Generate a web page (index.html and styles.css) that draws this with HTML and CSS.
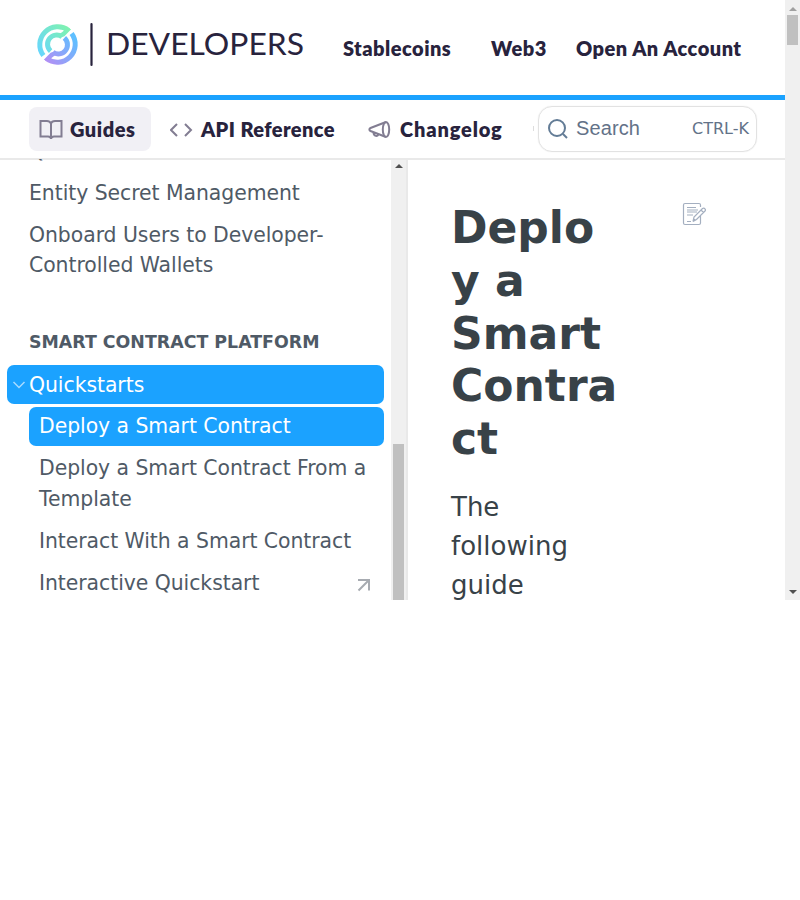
FILE: index.html
```html
<!DOCTYPE html>
<html lang="en">
<head>
<meta charset="utf-8">
<title>Deploy a Smart Contract</title>
<link rel="stylesheet" href="styles.css">
</head>
<body>
<div class="app">
  <div class="page">
    <header class="top">
      <svg class="logo" width="280" height="60" viewBox="30 15 280 60">
        <defs>
          <linearGradient id="g1" gradientUnits="userSpaceOnUse" x1="40" y1="52" x2="68" y2="30"><stop offset="0" stop-color="#68d7fa"/><stop offset="1" stop-color="#7ef1b3"/></linearGradient>
          <linearGradient id="g2" gradientUnits="userSpaceOnUse" x1="48" y1="62" x2="74" y2="38"><stop offset="0" stop-color="#b090f5"/><stop offset="1" stop-color="#5fbfff"/></linearGradient>
        </defs>
        <path stroke="url(#g1)" stroke-width="5" d="M43.400 55.600A18 18 0 0 1 68.600 30.400M50.600 51.100A9.200 9.200 0 0 1 62 36.700"/>
        <path fill="url(#g1)" d="M66 27.500L71.200 29.200L64.400 36.200L59.500 38L60 33.800L63.500 31Z"/>
        <path stroke="url(#g2)" stroke-width="5" d="M71.600 33.400A18 18 0 0 1 46.400 58.600M64.400 37.900A9.200 9.200 0 0 1 53 52.300"/>
        <path fill="url(#g2)" d="M49 61.500L43.800 59.800L50.600 52.800L55.500 51L55 55.200L51.500 58Z"/>
        <path d="M91.500 24V65" stroke="#28233d" stroke-width="2.200" stroke-linecap="round"/>
        <text class="brand" x="106" y="55.200" textLength="198" lengthAdjust="spacingAndGlyphs">DEVELOPERS</text>
      </svg>
      <nav class="links"><a class="l1">Stablecoins</a><a class="l2">Web3</a><a class="l3">Open An Account</a></nav>
    </header>
    <div class="subnav">
      <a class="tab active t1"><svg width="24" height="22" viewBox="0 0 24 22"><path d="M12 4.500C11 2.500 9.500 2 8 2H1.500V17.500H9C11 17.500 12 18.500 12 20C12 18.500 13 17.500 15 17.500H22.500V2H16C14 2 12.500 3 12 4.500V20"/></svg><span>Guides</span></a>
      <a class="tab t2"><svg width="24" height="22" viewBox="0 0 24 22"><path d="M7 5L1 11L7 17M15 5L21 11L15 17"/></svg><span>API Reference</span></a>
      <a class="tab t3"><svg width="24" height="22" viewBox="0 0 24 22"><ellipse cx="18" cy="10.500" rx="3.200" ry="7.500"/><path d="M18 3L2.500 9C1 9.700 1 11.300 2.500 12L18 18M5.500 13.300C5.500 17.500 10 18 10.500 15"/></svg><span>Changelog</span></a>
      <i class="tick"></i>
      <div class="search"><svg width="22" height="22" viewBox="0 0 22 22"><circle cx="10" cy="10" r="8"/><path d="M16 16L20 20"/></svg><span>Search</span><kbd>CTRL-K</kbd></div>
    </div>
    <div class="body">
      <aside class="side">
        <div class="item">Quickstarts</div>
        <div class="item">Entity Secret Management</div>
        <div class="item">Onboard Users to Developer-Controlled Wallets</div>
        <h2>SMART CONTRACT PLATFORM</h2>
        <div class="item parent"><svg width="14" height="10" viewBox="0 0 14 10"><path d="M1.500 2L7 7.500L12.500 2"/></svg>Quickstarts</div>
        <div class="item sub on">Deploy a Smart Contract</div>
        <div class="item sub">Deploy a Smart Contract From a Template</div>
        <div class="item sub">Interact With a Smart Contract</div>
        <div class="item sub out">Interactive Quickstart<svg width="14" height="14" viewBox="0 0 14 14"><path d="M1 2H12V12.500M12 2L1.500 12.500"/></svg></div>
      </aside>
      <div class="bar inner"><i class="up"></i><b></b></div>
      <main>
        <div class="copy">
          <h1>Deploy a Smart Contract</h1>
          <p>The following guide</p>
        </div>
        <svg class="edit" width="24" height="24" viewBox="0 0 24 24"><path d="M18.500 5V3Q18.500 1.500 17 1.500H3Q1.500 1.500 1.500 3V21Q1.500 22.500 3 22.500H17Q18.500 22.500 18.500 21V14M5 5.500H14M5 8H16M5 10H15M5 13H11M5 19.500H9M11 19.500L12 15L20.500 6.500Q22 5.500 23 7Q24 8 23 9L14.500 17.500L11 19.500L13 17M19 8L21.500 10.500"/></svg>
      </main>
    </div>
  </div>
  <div class="bar outer"><i class="up"></i><b></b><i class="down"></i></div>
</div>
</body>
</html>
```
FILE: styles.css
```css
* { box-sizing: border-box; }
body { margin: 0; background: #fff; font-family: "DejaVu Sans", sans-serif; }
svg { flex: none; fill: none; }
.app { display: flex; width: 800px; height: 600px; overflow: hidden; }
.page { width: 785px; display: flex; flex-direction: column; }
.top { height: 100px; flex: none; border-bottom: 5px solid #1ba2ff; display: flex; align-items: flex-start; padding: 15px 0 0 30px; }
.brand { font: 400 31px Lato, sans-serif; fill: #28233d; }
.links { display: flex; padding: 18px 0 0 33px; font-size: 20px; line-height: 30px; letter-spacing: .48px; }
.links, .tab { font-family: Lato, sans-serif; font-weight: 800; color: #28233d; white-space: nowrap; }
.l1 { width: 148px; }
.l2 { width: 85px; }
.subnav { height: 60px; flex: none; border-bottom: 2px solid #e9e9e9; display: flex; align-items: flex-start; padding: 6px 0 0 29px; }
.tab { height: 44px; margin-top: 1px; display: flex; align-items: center; font-size: 20px; letter-spacing: .4px; padding-left: 10px; border-radius: 8px; }
.tab svg { stroke: #827d92; stroke-width: 2; margin: 1px 7px 0 0; }
.t1 { width: 122px; letter-spacing: .55px; }
.t2 { width: 199px; padding-left: 19px; }
.t3 { width: 183px; padding-left: 18px; letter-spacing: .85px; }
.t3 svg { margin-right: 8px; }
.active { background: #f1f0f5; }
.tick { width: 1px; height: 5px; background: #ddd; margin: 20px 4px 0 0; }
.search { width: 219px; height: 46px; border: 1px solid #e2e2e2; box-shadow: 0 0 1px #ddd; border-radius: 14px; display: flex; align-items: center; padding: 0 7px 1px 8px; font: 20px "Liberation Sans", sans-serif; letter-spacing: .1px; color: #637288; }
.search svg { stroke: #637c96; stroke-width: 2; margin-right: 7px; }
.search kbd { margin-left: auto; font: 16px "DejaVu Sans", sans-serif; letter-spacing: 0; }
.body { flex: 1; min-height: 0; display: flex; }
.side { width: 391px; overflow: hidden; padding: 0 7px; margin-top: -1px; color: #4f5a66; }
.side .item { font-size: 20.400px; letter-spacing: -.05px; line-height: 30.400px; padding: 4.200px 10px 4.200px 22px; margin-bottom: 3.200px; border-radius: 7px; }
.side .item:first-child { margin-top: -27.200px; }
.side h2 { font-size: 17.400px; line-height: 24px; margin: 45px 0 11.400px 22px; }
.side .parent { background: #1ba2ff; color: #fff; padding-left: 5px; display: flex; align-items: center; }
.parent svg { stroke: #a8dbff; stroke-width: 1.500; margin-right: 3px; }
.side .sub { margin-left: 22px; padding-left: 10px; }
.side .on { background: #1ba2ff; color: #fff; }
.out { display: flex; align-items: center; justify-content: space-between; }
.out svg { stroke: #a7abb1; stroke-width: 2; margin: 4px 3px 0 0; }
.bar { width: 15px; background: #f0f0f0; display: flex; flex-direction: column; align-items: center; flex: none; }
.bar b { width: 11px; background: #c0c0c0; }
.inner { width: 17px; border-right: 2px solid #e9e9e9; }
.inner b { height: 156px; margin-top: 276px; }
.outer b { height: 30px; margin-top: 4px; }
.up { border: 4px solid transparent; border-top: 0; border-bottom-color: #a0a0a0; margin-top: 7px; }
.inner .up { border-bottom-color: #505050; margin-top: 4px; }
.down { border: 4px solid transparent; border-bottom: 0; border-top-color: #505050; margin: auto 0 6px; }
main { display: flex; justify-content: space-between; flex: 1; padding: 42px 79px 0 43px; color: #384248; overflow: hidden; }
.copy { width: 170px; }
h1 { font-size: 44px; line-height: 52.800px; margin: 0 0 22px; overflow-wrap: anywhere; }
p { font-size: 26px; line-height: 39px; margin: 0; width: 130px; }
.edit { stroke: #a4afc0; stroke-width: 1.200; }
```
